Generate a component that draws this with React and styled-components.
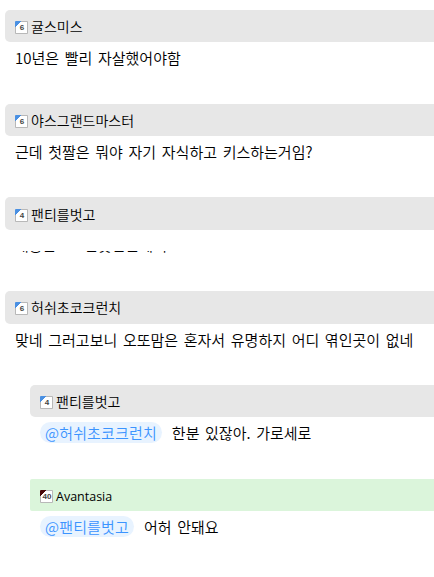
import React from "react";
import styled, { createGlobalStyle } from "styled-components";

const GlobalStyle = createGlobalStyle`
  body {
    margin: 0;
    background: #fff;
    overflow: hidden;
  }
`;
const List = styled.div`
  height: 577px;
  box-sizing: border-box;
  padding: 9.9px 0 0 5px;
  overflow: hidden;
  color: #000;
  font-family: "Noto Sans CJK KR", sans-serif;
  font-weight: 350;
`;
const Item = styled.div`
  height: 93.75px;
  margin-left: ${({ $reply }) => ($reply ? "25px" : "0")};
`;
const Header = styled.div`
  display: flex;
  align-items: center;
  gap: 3px;
  height: 32.5px;
  padding-left: 10px;
  border-radius: ${({ $owner }) => ($owner ? "2px 0 0 2px" : "5px 0 0 5px")};
  background: ${({ $owner }) => ($owner ? "#dbf5db" : "#e7e7e7")};
`;
const Level = styled.span`
  display: flex;
  align-items: center;
  justify-content: center;
  box-sizing: border-box;
  width: 13px;
  height: 13px;
  margin-top: 3px;
  padding: 1px 0 0 1px;
  border: 1px solid transparent;
  border-radius: 1px;
  background:
    linear-gradient(
        135deg,
        ${({ $color }) => $color} 4.4px,
        transparent 4.8px
      )
      border-box,
    linear-gradient(#fff, #fff) padding-box,
    linear-gradient(#b8b8b8, #b8b8b8) border-box;
  color: #444;
  font: bold 8px/8px "Liberation Sans Narrow", "Liberation Sans", sans-serif;
`;
const Name = styled.span`
  font-size: 14px;
  line-height: 20px;
  white-space: nowrap;
  ${({ $latin }) =>
    $latin &&
    `
    padding-top: 4px;
    font-family: "Open Sans", sans-serif;
    font-size: 12.5px;
    font-weight: 400;
  `}
`;
const Body = styled.div`
  display: flex;
  align-items: center;
  gap: 10px;
  height: 21px;
  padding: 5px 0 0 10px;
  font-size: 15px;
  line-height: 21px;
  word-spacing: 2.3px;
  white-space: nowrap;
`;
const Mention = styled.span`
  height: 21px;
  padding: 0 5px;
  border-radius: 11px;
  background: #e8f3ff;
  color: #3b94ff;
  letter-spacing: 0.15px;
`;
// only the lower edge of a folded comment stays visible
const Folded = styled.div`
  display: flex;
  align-items: flex-end;
  height: 2px;
  margin: 21px 0 0 10px;
  overflow: hidden;
  font-size: 15px;
  line-height: 16px;
  white-space: pre;
  word-spacing: 2.2px;
`;

const comments = [
  { level: 6, name: "귤스미스", text: "10년은 빨리 자살했어야함" },
  {
    level: 6,
    name: "야스그랜드마스터",
    text: "근데 첫짤은 뭐야 자기 자식하고 키스하는거임?",
  },
  {
    level: 4,
    name: "팬티를벗고",
    text: "내용은     안못한는데서",
    folded: true,
  },
  {
    level: 6,
    name: "허쉬초코크런치",
    text: "맞네 그러고보니 오또맘은 혼자서 유명하지 어디 엮인곳이 없네",
  },
  {
    level: 4,
    name: "팬티를벗고",
    to: "@허쉬초코크런치",
    text: "한분 있잖아. 가로세로",
  },
  {
    level: 40,
    name: "Avantasia",
    to: "@팬티를벗고",
    text: "어허 안돼요",
    owner: true,
  },
];

function Comment({ level, name, text, to, owner, folded }) {
  return (
    <Item $reply={!!to}>
      <Header $owner={owner}>
        <Level $color={owner ? "#4a0808" : "#4a90e2"}>{level}</Level>
        <Name $latin={owner}>{name}</Name>
      </Header>
      {folded ? (
        <Folded>{text}</Folded>
      ) : (
        <Body>
          {to && <Mention>{to}</Mention>}
          <span>{text}</span>
        </Body>
      )}
    </Item>
  );
}

function App() {
  return (
    <List>
      <GlobalStyle />
      {comments.map((comment, i) => (
        <Comment key={i} {...comment} />
      ))}
    </List>
  );
}

export default App;
